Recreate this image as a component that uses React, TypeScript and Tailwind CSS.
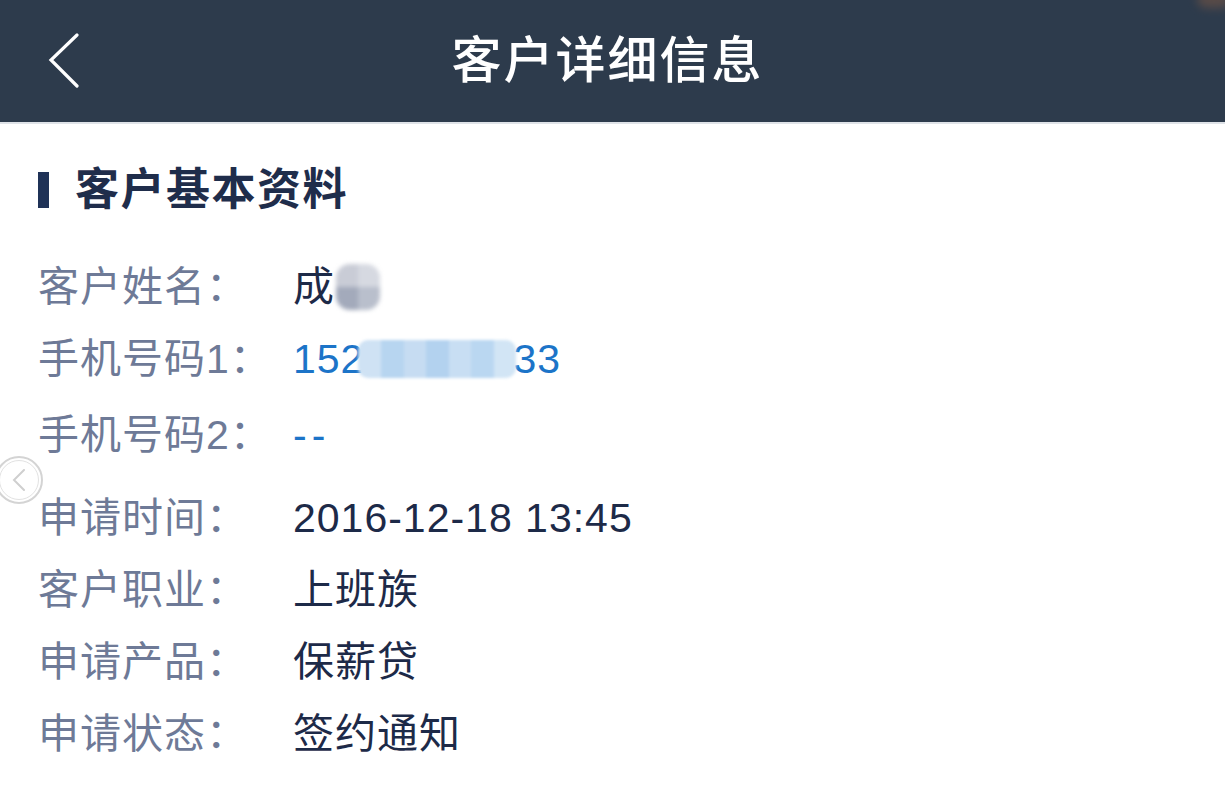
import React from "react";

const FONT = {
  fontFamily: '"Liberation Sans", "Noto Sans CJK SC", sans-serif',
};

interface InfoRow {
  label: string;
  value: React.ReactNode;
  tone?: "link" | "plain";
  extra?: string;
}

function NameBlur() {
  return (
    <span className="ml-[1px] inline-grid h-[46px] w-[44px] grid-cols-2 grid-rows-2 overflow-hidden rounded-[14px] align-middle blur-[2px]">
      <span className="bg-[#c9ccd6]" />
      <span className="bg-[#d6d9e1]" />
      <span className="bg-[#a3aabb]" />
      <span className="bg-[#b9bfcc]" />
    </span>
  );
}

function PhoneBlur() {
  return (
    <span className="ml-[-6px] mr-[-3px] inline-flex h-[38px] w-[158px] overflow-hidden rounded-[10px] align-middle blur-[1.5px]">
      <span className="flex-1 bg-[#cfe2f4]" />
      <span className="flex-1 bg-[#b7d5f0]" />
      <span className="flex-1 bg-[#c6dcf2]" />
      <span className="flex-1 bg-[#b3d2ef]" />
      <span className="flex-1 bg-[#c8def3]" />
      <span className="flex-1 bg-[#bad7f1]" />
      <span className="flex-1 bg-[#d2e5f5]" />
    </span>
  );
}

const rows: InfoRow[] = [
  {
    label: "客户姓名：",
    value: (
      <>
        成<NameBlur />
      </>
    ),
  },
  {
    label: "手机号码1：",
    value: (
      <>
        152<PhoneBlur />33
      </>
    ),
    tone: "link",
  },
  {
    label: "手机号码2：",
    value: <span className="tracking-[5px]">--</span>,
    tone: "link",
    extra: "mt-[4px]",
  },
  { label: "申请时间：", value: "2016-12-18 13:45", extra: "mt-[11px]" },
  { label: "客户职业：", value: "上班族" },
  { label: "申请产品：", value: "保薪贷" },
  { label: "申请状态：", value: "签约通知" },
];

export default function App() {
  return (
    <div className="relative min-h-[785px] w-full bg-white" style={FONT}>
      {/* Top bar */}
      <header className="relative box-content flex h-[122px] items-center border-b-2 border-[#dfe3e8] bg-[#2d3b4c]">
        <div className="flex w-[120px] items-center pl-[48px]">
          <svg width="32" height="56" viewBox="0 0 32 56" fill="none">
            <path
              d="M29 2 L3 27 L29 53"
              stroke="#ffffff"
              strokeWidth="3.2"
              strokeLinecap="round"
              strokeLinejoin="miter"
            />
          </svg>
        </div>
        <h1 className="flex-1 pr-[10px] text-center text-[50px] font-medium leading-none tracking-[2px] text-white">
          客户详细信息
        </h1>
        <div className="w-[120px]" />
        <span className="absolute right-[-6px] top-[-10px] h-[18px] w-[34px] rounded-full bg-[#6b5246] opacity-70 blur-[5px]" />
      </header>

      <main className="pl-[38px] pt-[43px]">
        <div className="flex h-[46px] items-center">
          <span className="h-[36px] w-[11px] bg-[#1f3257]" />
          <h2 className="ml-[26px] text-[44px] font-bold leading-none tracking-[1.5px] text-[#1f2d4b]">
            客户基本资料
          </h2>
        </div>

        <div className="mt-[38px] flex flex-col">
          {rows.map((row) => (
            <div
              key={row.label}
              className={`flex h-[72px] items-center text-[41px] leading-none ${row.extra ?? ""}`}
            >
              <span className="w-[255px] shrink-0 tracking-[1px] text-[#6e7a97]">
                {row.label}
              </span>
              <span
                className={`flex items-center tracking-[1px] ${
                  row.tone === "link" ? "text-[#1c74c8]" : "text-[#1d2a48]"
                }`}
              >
                {row.value}
              </span>
            </div>
          ))}
        </div>
      </main>

      {/* floating side handle */}
      <div className="absolute left-[-5px] top-[456px] flex h-[48px] w-[48px] items-center justify-center rounded-full border-2 border-[#d4d4d4] bg-white/60">
        <div className="flex h-[40px] w-[40px] items-center justify-center rounded-full border border-[#e2e2e2]">
          <svg width="14" height="22" viewBox="0 0 14 22" fill="none">
            <path
              d="M12 1 L2 11 L12 21"
              stroke="#cfcfcf"
              strokeWidth="2"
              strokeLinecap="round"
            />
          </svg>
        </div>
      </div>
    </div>
  );
}
